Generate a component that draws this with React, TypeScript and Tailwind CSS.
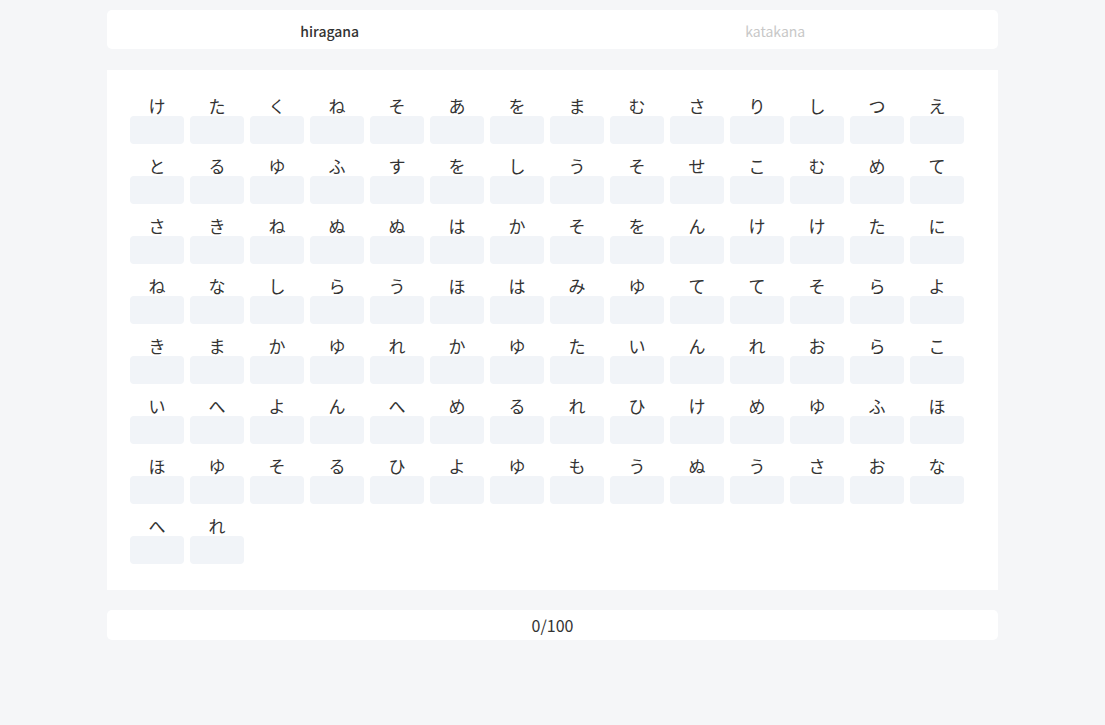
const KANA =
  "けたくねそあをまむさりしつえ" +
  "とるゆふすをしうそせこむめて" +
  "さきねぬぬはかそをんけけたに" +
  "ねなしらうほはみゆててそらよ" +
  "きまかゆれかゆたいんれおらこ" +
  "いへよんへめるれひけめゆふほ" +
  "ほゆそるひよゆもうぬうさおな" +
  "へれ";

function Cell({ kana }: { kana: string }) {
  return (
    <div className="flex w-[54px] flex-col items-center">
      <span className="h-[20px] text-[17px] leading-[20px] text-[#333]">
        {kana}
      </span>
      <input
        className="h-[28px] w-[54px] rounded-[4px] bg-[#f1f4f8] outline-none"
        aria-label={kana}
      />
    </div>
  );
}

export default function App() {
  return (
    <div
      className="min-h-[725px] w-full bg-[#f5f6f8] pt-[10px]"
      style={{ fontFamily: '"Noto Sans CJK JP", "Noto Sans", sans-serif' }}
    >
      <div className="mx-auto flex w-[891px] flex-col">
        {/* Tabs */}
        <div className="flex h-[39px] rounded-[5px] bg-white">
          <button className="flex-1 pt-[3px] text-[14px] font-medium text-[#333]">
            hiragana
          </button>
          <button className="flex-1 pt-[3px] text-[14px] text-[#c8c8c8]">
            katakana
          </button>
        </div>

        {/* Board */}
        <div className="mt-[21px] flex h-[520px] flex-wrap content-start gap-x-[6px] gap-y-[12px] bg-white pl-[23px] pr-[20px] pt-[26px]">
          {Array.from(KANA).map((k, i) => (
            <Cell key={i} kana={k} />
          ))}
        </div>

        {/* Score */}
        <div className="mt-[20px] flex h-[30px] items-center justify-center rounded-[5px] bg-white text-[16px] text-[#333]">
          0/100
        </div>
      </div>
    </div>
  );
}
